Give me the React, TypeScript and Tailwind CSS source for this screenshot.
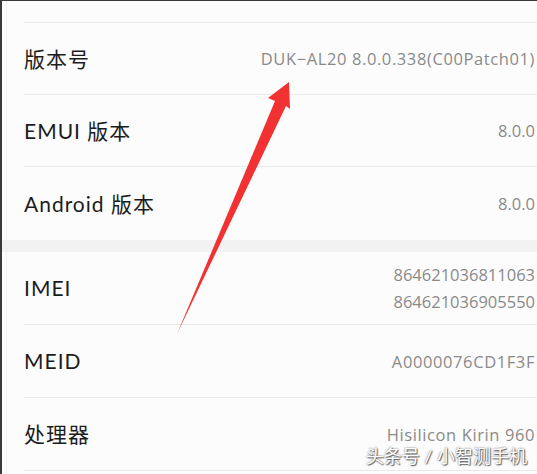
import React from "react"

type Item = { label: string, values: string[], wide?: boolean }

const groupA: Item[] = [
  { label: "版本号", values: ["DUK−AL20 8.0.0.338(C00Patch01)"], wide: true },
  { label: "EMUI 版本", values: ["8.0.0"] },
  { label: "Android 版本", values: ["8.0.0"] },
]

const groupB: Item[] = [
  { label: "IMEI", values: ["864621036811063", "864621036905550"] },
  { label: "MEID", values: ["A0000076CD1F3F"], wide: true },
  { label: "处理器", values: ["Hisilicon Kirin 960"], wide: true },
]

const font = "font-['Lato','Noto_Sans_CJK_SC',sans-serif]"

function Row({ item, last, tall }: { item: Item, last?: boolean, tall?: boolean }) {
  return (
    <div className={`ml-[22px] flex items-center justify-between pr-[2px] ${tall ? "h-[73px]" : "h-[72px]"} ${last ? "" : "border-b border-[#e9e9e9]"}`}>
      <span className="text-[21px] tracking-[1px] text-[#1c1c1c]">{item.label}</span>
      <div className={`flex flex-col items-end font-['Open_Sans','Noto_Sans_CJK_SC',sans-serif] text-[16.5px] leading-[27px] text-[#8a8a8a] ${item.wide ? "tracking-[0.6px]" : ""}`}>
        {item.values.map((v) => <span key={v}>{v}</span>)}
      </div>
    </div>
  )
}

export default function App() {
  return (
    <div className={`relative h-[474px] w-[537px] overflow-hidden border-l-2 border-t border-[#3a3a3a] bg-[#fcfcfc] ${font}`}>
      <div className="absolute inset-y-0 left-[4px] w-px bg-[#f0f0f0]" />
      <div className="h-[21px]" />
      <div className="ml-[22px] border-t border-[#e9e9e9]" />
      {groupA.map((it, i) => (
        <Row key={it.label} item={it} last={i === groupA.length - 1} tall={i === groupA.length - 1} />
      ))}
      <div className="h-[12px] bg-[#f2f2f2]" />
      {groupB.map((it) => <Row key={it.label} item={it} tall />)}

      <svg className="pointer-events-none absolute left-0 top-0" width="537" height="474">
        <polygon
          points="287,81 288,108 284,105 175,333 273,100 266,97"
          fill="#f23232"
        />
      </svg>

      <div className="absolute bottom-[4px] right-[10px] text-[18px] text-white [text-shadow:0_0_2px_#555,1px_1px_1px_#666]">
        头条号 / 小智测手机
      </div>
    </div>
  )
}
